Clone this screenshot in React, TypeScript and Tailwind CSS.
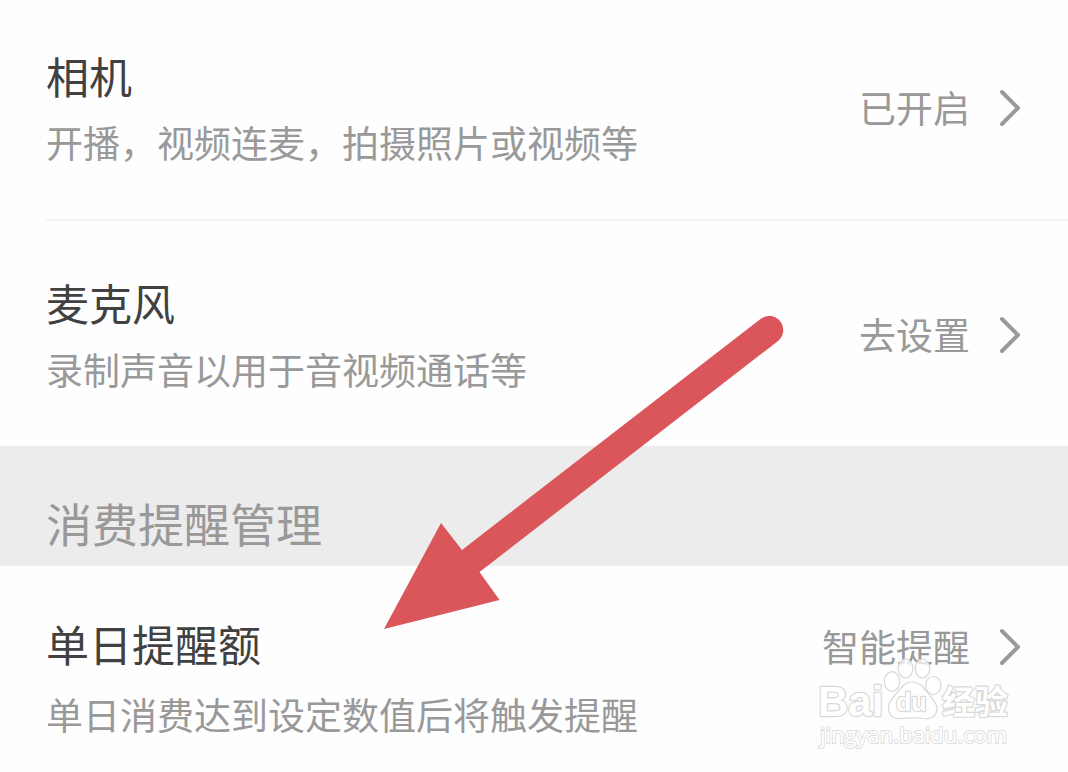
type Setting = {
  title: string;
  description: string;
  status: string;
  rowClass: string;
  descriptionClass: string;
};

const camera: Setting = {
  title: "相机",
  description: "开播，视频连麦，拍摄照片或视频等",
  status: "已开启",
  rowClass: "pt-12 pb-[37px]",
  descriptionClass: "leading-[80px]",
};

const microphone: Setting = {
  title: "麦克风",
  description: "录制声音以用于音视频通话等",
  status: "去设置",
  rowClass: "pt-[54px] pb-[37px]",
  descriptionClass: "leading-[80px]",
};

const dailyLimit: Setting = {
  title: "单日提醒额",
  description: "单日消费达到设定数值后将触发提醒",
  status: "智能提醒",
  rowClass: "pt-[50px] pb-3",
  descriptionClass: "leading-[88px]",
};

function Chevron() {
  return (
    <svg aria-hidden="true" className="h-10 w-6" viewBox="0 0 24 40" fill="none" stroke="#9a9a9a" strokeWidth="4" strokeLinecap="round" strokeLinejoin="round">
      <path d="M4 4 20 20 4 36" />
    </svg>
  );
}

function SettingRow({ setting, compact = false }: { setting: Setting; compact?: boolean }) {
  return (
    <button type="button" className={`flex w-full items-start justify-between pr-[46px] text-left ${setting.rowClass}`}>
      <span className="flex flex-col">
        <span className="text-[43px] leading-[54px] text-[#414141]">{setting.title}</span>
        <span className={`text-[37px] text-[#999999] ${setting.descriptionClass}`}>{setting.description}</span>
      </span>
      <span className={`flex items-center gap-7 text-[37px] text-[#999999] ${compact ? "h-[62px]" : "h-[120px]"}`}>
        {setting.status}
        <Chevron />
      </span>
    </button>
  );
}

function Arrow() {
  return (
    <svg aria-hidden="true" className="pointer-events-none absolute top-[312px] left-[380px] h-80 w-[410px]" viewBox="380 312 410 320" fill="#da565b">
      <path d="M384 629 441 523 462 550 760.500 319A14 14 0 0 1 778 341L479.500 572 499.500 600Z" />
    </svg>
  );
}

function Watermark() {
  return (
    <svg
      aria-label="Baidu 经验"
      className="pointer-events-none absolute top-[652px] right-[48px] h-[104px] w-[208px]"
      viewBox="812 652 208 104"
      fill="#ffffff"
      stroke="#d8d8d8"
      strokeWidth="1.2"
      strokeLinejoin="round"
    >
      <g fillOpacity="0.75">
        <ellipse cx="892" cy="681.500" rx="7.700" ry="9.800" />
        <ellipse cx="905.500" cy="668.500" rx="7.300" ry="9.500" />
        <ellipse cx="922.500" cy="668.500" rx="7.300" ry="9.500" />
        <ellipse cx="933.300" cy="685.500" rx="7.700" ry="9" />
      </g>
      <path d="M912 682C904 682 900 689 896 694C891 700 888 703 888.500 709C889 716 894 719 901 718.500C907 718 916 717.500 923 718.500C931 720 937 716 937 708C936.500 702 931 697 927 692C923 687 920 682 912 682Z" />
      <g paintOrder="stroke" strokeWidth="2.4">
        <text x="818" y="716" fontSize="42" className="font-['Liberation_Sans',sans-serif] font-bold">Bai</text>
        <text x="896" y="711" fontSize="25" className="font-['Liberation_Sans',sans-serif] font-bold">du</text>
        <text x="942" y="714" fontSize="33" className="font-['Noto_Sans_CJK_SC',sans-serif] font-bold">经验</text>
        <text x="820" y="743" fontSize="22" strokeWidth="2" stroke="#dfdfdf" className="font-['Open_Sans',sans-serif] font-medium">jingyan.baidu.com</text>
      </g>
    </svg>
  );
}

export default function App() {
  return (
    <main className="relative min-h-screen overflow-hidden bg-[#fefefe] font-['Noto_Sans_CJK_SC',sans-serif]">
      <section className="pl-[46px]">
        <div className="border-b-2 border-[#f3f3f3]">
          <SettingRow setting={camera} />
        </div>
        <SettingRow setting={microphone} />
      </section>
      <h2 className="bg-[#ececec] pt-[45px] pb-[13px] pl-[46px] text-[46px] leading-[62px] font-normal text-[#999999]">消费提醒管理</h2>
      <section className="pl-[46px]">
        <SettingRow setting={dailyLimit} compact />
      </section>
      <Arrow />
      <Watermark />
    </main>
  );
}
